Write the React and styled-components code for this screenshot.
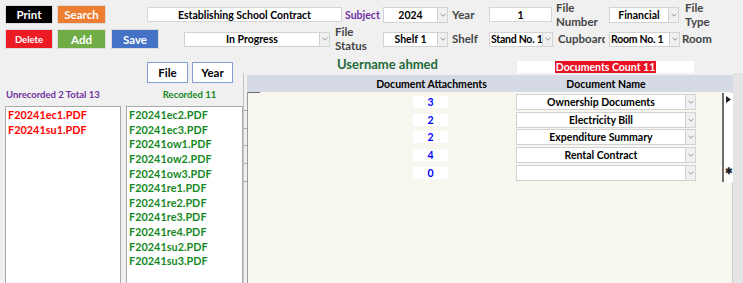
import React from "react";
import styled, { createGlobalStyle } from "styled-components";

const GlobalStyle = createGlobalStyle`
  html, body { margin: 0; padding: 0; background: #f0f0f0; }
  body { font-family: Lato, "Liberation Sans", sans-serif; }
  * { box-sizing: border-box; }
`;

const Root = styled.div`
  width: 743px;
  height: 283px;
  overflow: hidden;
  background: #f0f0f0;
  font-family: Lato, "Liberation Sans", sans-serif;
`;

const ToolbarRow = styled.div`
  display: flex;
  align-items: center;
  height: ${(p) => p.$h}px;
  margin-top: ${(p) => p.$top}px;
  padding-left: 5px;
`;

const ActionButton = styled.button`
  width: ${(p) => p.$w}px;
  height: 100%;
  margin-left: ${(p) => p.$ml || 0}px;
  background: ${(p) => p.$bg};
  color: #fff;
  border: 1px solid #dcdcdc;
  font-family: inherit;
  font-weight: 700;
  font-size: ${(p) => p.$fs || 11.5}px;
  padding: 0;
  flex: none;
`;

const TextBox = styled.div`
  width: ${(p) => p.$w}px;
  height: ${(p) => p.$h}px;
  margin-left: ${(p) => p.$ml || 0}px;
  background: #fff;
  border: 1px solid #d6d6d6;
  font-weight: 700;
  font-size: 10.5px;
  color: #000;
  display: flex;
  align-items: center;
  justify-content: center;
  white-space: nowrap;
  flex: none;
`;

const ComboBox = styled.div`
  width: ${(p) => p.$w}px;
  height: ${(p) => p.$h}px;
  margin-left: ${(p) => p.$ml || 0}px;
  background: #fff;
  border: 1px solid #d2d2d2;
  display: flex;
  flex: none;
`;

const ComboText = styled.div`
  flex: 1;
  min-width: 0;
  overflow: hidden;
  display: flex;
  align-items: center;
  justify-content: ${(p) => (p.$align === "left" ? "flex-start" : "center")};
  padding-left: ${(p) => (p.$align === "left" ? 1 : 0)}px;
  letter-spacing: ${(p) => (p.$align === "left" ? "-0.25px" : "normal")};
  font-weight: 700;
  font-size: 10.5px;
  color: #000;
  white-space: nowrap;
`;

const DropButton = styled.div`
  width: 10px;
  flex: none;
  background: #f0f0f0;
  border-left: 1px solid #d2d2d2;
  display: flex;
  align-items: center;
  justify-content: center;
`;

const FieldLabel = styled.div`
  width: ${(p) => p.$w}px;
  padding-left: ${(p) => p.$pl || 0}px;
  color: ${(p) => p.$color || "#454545"};
  font-weight: 700;
  font-size: ${(p) => p.$fs || 11.5}px;
  line-height: 14px;
  white-space: nowrap;
  overflow: hidden;
  flex: none;
`;

const ClipText = styled.span`
  display: block;
  width: ${(p) => p.$w}px;
  overflow: hidden;
`;

const Body = styled.div`
  display: flex;
  margin-top: 6px;
`;

const LeftPanel = styled.div`
  width: 243px;
  padding-left: 5px;
  display: flex;
  flex-direction: column;
  flex: none;
`;

const ToggleRow = styled.div`
  display: flex;
  gap: 4px;
  margin-top: 7px;
  padding-left: 142px;
  height: 21px;
`;

const ToggleButton = styled.button`
  width: 41px;
  height: 21px;
  background: #fff;
  border: 1.5px solid #7f9fd6;
  font-family: inherit;
  font-weight: 700;
  font-size: 11.5px;
  color: #000;
  padding: 0;
`;

const TwoCols = styled.div`
  display: grid;
  grid-template-columns: 116px 117px;
  column-gap: 5px;
`;

const ListHead = styled.div`
  height: 23px;
  display: flex;
  align-items: center;
  justify-content: ${(p) => (p.$center ? "center" : "flex-start")};
  padding-left: ${(p) => p.$pl || 0}px;
  color: ${(p) => p.$color};
  font-weight: 700;
  font-size: 9.5px;
  white-space: nowrap;
`;

const FileList = styled.div`
  height: 200px;
  background: #fff;
  border: 1px solid #a9a9a9;
  padding: 1px 0 0 2px;
`;

const FileItem = styled.div`
  height: 14.65px;
  line-height: 14.65px;
  font-weight: 700;
  font-size: 10.8px;
  letter-spacing: 0.05px;
  color: ${(p) => p.$color};
  white-space: nowrap;
`;

const RightPanel = styled.div`
  width: 500px;
  display: flex;
  flex-direction: column;
  flex: none;
`;

const InfoBar = styled.div`
  height: 18px;
  display: flex;
  align-items: flex-end;
`;

const Username = styled.div`
  margin-left: 94px;
  width: 180px;
  margin-bottom: 1px;
  line-height: 15px;
  font-weight: 700;
  font-size: 13px;
  color: #1e6b3a;
  white-space: nowrap;
`;

const CountBox = styled.div`
  width: 177px;
  height: 12px;
  background: #fff;
  display: flex;
  justify-content: center;
`;

const CountText = styled.span`
  background: #e81123;
  color: #fff;
  font-weight: 700;
  font-size: 10.5px;
  line-height: 12px;
  padding: 0 1px;
  white-space: nowrap;
`;

const Subform = styled.div`
  height: 220px;
  padding: 2px 10px 0 3px;
  border-left: 1px solid #c4c4c4;
  background: linear-gradient(to right, #f0f0f0 0 489px, #e4e4e4 489px);
  display: flex;
  flex-direction: column;
`;

const SubHeader = styled.div`
  height: 17px;
  background: #d6dae4;
  display: grid;
  grid-template-columns: 127px 115px 27px 180px 1fr;
  align-items: center;
`;

const HeadCell = styled.div`
  grid-column: ${(p) => p.$col};
  text-align: center;
  font-weight: 700;
  font-size: 10.5px;
  color: #000;
  white-space: nowrap;
`;

const SubBody = styled.div`
  flex: 1;
  background: #f7f7f0;
  border-left: 1px solid #9c9c9c;
  border-right: 1px solid #cfcfcf;
  padding-top: 1px;
  position: relative;
`;

const SelectorHead = styled.div`
  position: absolute;
  left: 0;
  top: 0;
  width: 12px;
  height: 1px;
  background: #6a6a6a;
`;

const SubRow = styled.div`
  position: relative;
  height: 17.8px;
  display: grid;
  grid-template-columns: 165px 35px 68px 180px 26px 11px;
  align-items: center;
  &::after {
    content: "";
    position: absolute;
    left: -4px;
    bottom: 0;
    width: 3px;
    height: 1px;
    background: #a8a8a8;
  }
`;

const NumBox = styled.div`
  grid-column: 2;
  height: 12px;
  background: #fff;
  color: #0000ff;
  font-weight: 700;
  font-size: 10.5px;
  line-height: 12px;
  text-align: center;
`;

const RowCombo = styled(ComboBox)`
  grid-column: 4;
`;

const RecordCell = styled.div`
  grid-column: 6;
  align-self: stretch;
  background: #fff;
  border-left: 2px solid #6e6e6e;
  display: flex;
  justify-content: center;
  align-items: flex-start;
  padding-top: ${(p) => p.$pt || 3}px;
  font-size: 9px;
  font-weight: 700;
  line-height: 9px;
  color: #222;
`;

const Chevron = () => (
  <svg width="6" height="4" viewBox="0 0 6 4">
    <path d="M0.5 0.7 L3 3.2 L5.5 0.7" fill="none" stroke="#8c8c8c" strokeWidth="0.9" />
  </svg>
);

const Arrow = () => (
  <svg width="5" height="7" viewBox="0 0 5 7">
    <path d="M0 0 L5 3.5 L0 7 Z" fill="#222" />
  </svg>
);

function Combo({ w, h, ml, align, children }) {
  return (
    <ComboBox $w={w} $h={h} $ml={ml}>
      <ComboText $align={align}>{children}</ComboText>
      <DropButton>
        <Chevron />
      </DropButton>
    </ComboBox>
  );
}

const unrecorded = ["F20241ec1.PDF", "F20241su1.PDF"];
const recorded = [
  "F20241ec2.PDF",
  "F20241ec3.PDF",
  "F20241ow1.PDF",
  "F20241ow2.PDF",
  "F20241ow3.PDF",
  "F20241re1.PDF",
  "F20241re2.PDF",
  "F20241re3.PDF",
  "F20241re4.PDF",
  "F20241su2.PDF",
  "F20241su3.PDF",
];

const docs = [
  { n: "3", name: "Ownership Documents" },
  { n: "2", name: "Electricity Bill" },
  { n: "2", name: "Expenditure Summary" },
  { n: "4", name: "Rental Contract" },
  { n: "0", name: "" },
];

export default function App() {
  return (
    <Root>
      <GlobalStyle />
      <ToolbarRow $top={5} $h={19}>
        <ActionButton $w={48} $bg="#000000">Print</ActionButton>
        <ActionButton $w={49} $ml={4} $bg="#ed7d31">Search</ActionButton>
        <TextBox $w={195} $h={15} $ml={41}>Establishing School Contract</TextBox>
        <FieldLabel $w={41} $pl={3} $fs={10.5} $color="#7030a0">Subject</FieldLabel>
        <Combo w={65} h={16}>2024</Combo>
        <FieldLabel $w={41} $pl={4}>Year</FieldLabel>
        <TextBox $w={63} $h={15}>1</TextBox>
        <FieldLabel $w={57} $pl={4}>File<br />Number</FieldLabel>
        <Combo w={70} h={16}>Financial</Combo>
        <FieldLabel $w={64} $pl={6}>File<br />Type</FieldLabel>
      </ToolbarRow>
      <ToolbarRow $top={5} $h={20}>
        <ActionButton $w={48} $bg="#ed1c24" $fs={9.5}>Delete</ActionButton>
        <ActionButton $w={49} $ml={4} $bg="#70ad47">Add</ActionButton>
        <ActionButton $w={48} $ml={5} $bg="#4472c4">Save</ActionButton>
        <Combo w={146} h={15} ml={25}>In Progress</Combo>
        <FieldLabel $w={53} $pl={5}>File<br />Status</FieldLabel>
        <Combo w={65} h={15}>Shelf 1</Combo>
        <FieldLabel $w={41} $pl={4}>Shelf</FieldLabel>
        <Combo w={64} h={15} align="left">Stand No. 1</Combo>
        <FieldLabel $w={56} $pl={5}><ClipText $w={47}>Cupboard</ClipText></FieldLabel>
        <Combo w={71} h={15} align="left">Room No. 1</Combo>
        <FieldLabel $w={63} $pl={2}>Room</FieldLabel>
      </ToolbarRow>
      <Body>
        <LeftPanel>
          <ToggleRow>
            <ToggleButton>File</ToggleButton>
            <ToggleButton>Year</ToggleButton>
          </ToggleRow>
          <TwoCols>
            <ListHead $color="#7030a0" $pl={1}>Unrecorded 2 Total 13</ListHead>
            <ListHead $color="#15891f" $center $pl={10}>Recorded 11</ListHead>
          </TwoCols>
          <TwoCols>
            <FileList>
              {unrecorded.map((f) => (
                <FileItem key={f} $color="#ff0000">{f}</FileItem>
              ))}
            </FileList>
            <FileList>
              {recorded.map((f) => (
                <FileItem key={f} $color="#15891f">{f}</FileItem>
              ))}
            </FileList>
          </TwoCols>
        </LeftPanel>
        <RightPanel>
          <InfoBar>
            <Username>Username ahmed</Username>
            <CountBox>
              <CountText>Documents Count 11</CountText>
            </CountBox>
          </InfoBar>
          <Subform>
            <SubHeader>
              <HeadCell $col={2}>Document Attachments</HeadCell>
              <HeadCell $col={4}>Document Name</HeadCell>
            </SubHeader>
            <SubBody>
              <SelectorHead />
              {docs.map((d, i) => (
                <SubRow key={i}>
                  <NumBox>{d.n}</NumBox>
                  <RowCombo $w={180} $h={16}>
                    <ComboText>{d.name}</ComboText>
                    <DropButton>
                      <Chevron />
                    </DropButton>
                  </RowCombo>
                  <RecordCell $pt={i === 4 ? 2 : 3}>
                    {i === 0 ? <Arrow /> : i === 4 ? "✱" : null}
                  </RecordCell>
                </SubRow>
              ))}
            </SubBody>
          </Subform>
        </RightPanel>
      </Body>
    </Root>
  );
}
